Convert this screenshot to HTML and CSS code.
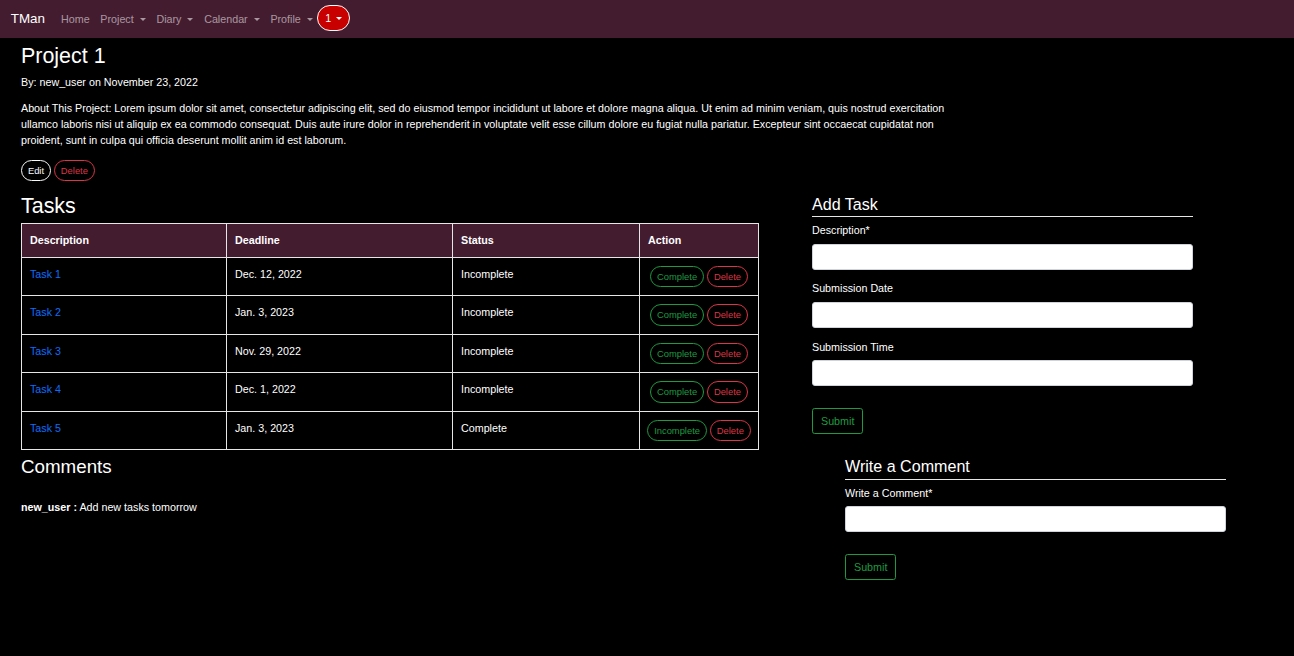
FILE: index.html
```html
<!DOCTYPE html>
<html lang="en">
<head>
<meta charset="utf-8">
<title>TMan - Project 1</title>
<link rel="stylesheet" href="styles.css">
</head>
<body>
<nav class="navbar">
  <a class="brand" href="#">TMan</a>
  <ul class="nav">
    <li><a class="nav-link" href="#">Home</a></li>
    <li><a class="nav-link" href="#">Project<span class="caret"></span></a></li>
    <li><a class="nav-link" href="#">Diary<span class="caret"></span></a></li>
    <li><a class="nav-link" href="#">Calendar<span class="caret"></span></a></li>
    <li><a class="nav-link" href="#">Profile<span class="caret"></span></a></li>
    <li><button class="notif">1<span class="caret"></span></button></li>
  </ul>
</nav>

<main class="page">
  <h2 class="title">Project 1</h2>
  <p class="meta">By: new_user on November 23, 2022</p>
  <p class="about">About This Project: Lorem ipsum dolor sit amet, consectetur adipiscing elit, sed do eiusmod tempor incididunt ut labore et dolore magna aliqua. Ut enim ad minim veniam, quis nostrud exercitation ullamco laboris nisi ut aliquip ex ea commodo consequat. Duis aute irure dolor in reprehenderit in voluptate velit esse cillum dolore eu fugiat nulla pariatur. Excepteur sint occaecat cupidatat non proident, sunt in culpa qui officia deserunt mollit anim id est laborum.</p>
  <div class="project-actions">
    <button class="btn btn-sm pill outline-light">Edit</button>
    <button class="btn btn-sm pill outline-danger">Delete</button>
  </div>

  <div class="row">
    <section class="left-col">
      <h2 class="section-title">Tasks</h2>
      <table class="tasks">
        <thead>
          <tr><th class="c1">Description</th><th class="c2">Deadline</th><th class="c3">Status</th><th class="c4">Action</th></tr>
        </thead>
        <tbody>
          <tr><td><a href="#">Task 1</a></td><td>Dec. 12, 2022</td><td>Incomplete</td><td class="act"><button class="btn btn-sm pill outline-success">Complete</button> <button class="btn btn-sm pill outline-danger">Delete</button></td></tr>
          <tr><td><a href="#">Task 2</a></td><td>Jan. 3, 2023</td><td>Incomplete</td><td class="act"><button class="btn btn-sm pill outline-success">Complete</button> <button class="btn btn-sm pill outline-danger">Delete</button></td></tr>
          <tr><td><a href="#">Task 3</a></td><td>Nov. 29, 2022</td><td>Incomplete</td><td class="act"><button class="btn btn-sm pill outline-success">Complete</button> <button class="btn btn-sm pill outline-danger">Delete</button></td></tr>
          <tr><td><a href="#">Task 4</a></td><td>Dec. 1, 2022</td><td>Incomplete</td><td class="act"><button class="btn btn-sm pill outline-success">Complete</button> <button class="btn btn-sm pill outline-danger">Delete</button></td></tr>
          <tr><td><a href="#">Task 5</a></td><td>Jan. 3, 2023</td><td>Complete</td><td class="act"><button class="btn btn-sm pill outline-success">Incomplete</button> <button class="btn btn-sm pill outline-danger">Delete</button></td></tr>
        </tbody>
      </table>
    </section>
    <section class="right-col task-form">
      <h4 class="form-title">Add Task</h4>
      <div class="form-group">
        <label>Description*</label>
        <input class="form-control" type="text">
      </div>
      <div class="form-group">
        <label>Submission Date</label>
        <input class="form-control" type="text">
      </div>
      <div class="form-group">
        <label>Submission Time</label>
        <input class="form-control" type="text">
      </div>
      <button class="btn outline-success submit">Submit</button>
    </section>
  </div>

  <div class="row">
    <section class="left-col">
      <h3 class="comments-title">Comments</h3>
      <p class="comment"><strong>new_user :</strong> Add new tasks tomorrow</p>
    </section>
    <section class="right-col comment-form">
      <h4 class="form-title">Write a Comment</h4>
      <div class="form-group">
        <label>Write a Comment*</label>
        <input class="form-control" type="text">
      </div>
      <button class="btn outline-success submit">Submit</button>
    </section>
  </div>
</main>
</body>
</html>
```
FILE: styles.css
```css
* { box-sizing: border-box; }

html, body {
  margin: 0;
  padding: 0;
  background: #000;
  color: #fff;
  font-family: "Liberation Sans", Arial, sans-serif;
  font-size: 10.72px;
  line-height: 1.5;
}

a { text-decoration: none; }

.navbar {
  height: 38px;
  background: #441c30;
  display: flex;
  align-items: center;
  padding: 0 10.72px;
}

.brand {
  color: #fff;
  font-size: 13.4px;
  font-weight: 400;
  margin-right: 10.72px;
}

.nav {
  display: flex;
  align-items: center;
  list-style: none;
  margin: 0;
  padding: 0;
}

.nav-link {
  display: block;
  color: rgba(255, 255, 255, 0.55);
  padding: 5.36px;
}

.caret {
  display: inline-block;
  margin-left: 6px;
  vertical-align: 2px;
  border-top: 3.2px solid;
  border-left: 3.2px solid transparent;
  border-right: 3.2px solid transparent;
}

.notif {
  font-family: inherit;
  font-size: 10.72px;
  line-height: 1.5;
  color: #fff;
  background: #c80000;
  border: 1px solid #fff;
  border-radius: 13px;
  padding: 4px 6.5px 4px 7px;
  margin: -1px 0 0 -1px;
  height: 26px;
}

.notif .caret { margin-left: 5px; }

.page {
  padding: 6px 21px 0 21px;
}

.title {
  font-size: 21.44px;
  font-weight: 400;
  line-height: 1.2;
  margin: 0 0 4.36px;
}

.meta {
  margin: 0 0 9.72px;
}

.about {
  max-width: 952px;
  margin: 0 0 11.72px;
}

.project-actions {
  display: flex;
  gap: 3px;
  margin-bottom: 12.5px;
}

.btn {
  font-family: inherit;
  display: inline-block;
  background: transparent;
  border: 1px solid;
  cursor: pointer;
  line-height: 1.5;
}

.btn-sm {
  font-size: 9.38px;
  padding: 2.68px 5.9px;
}

.pill { border-radius: 50px; }

.outline-light { color: #f8f9fa; border-color: #f8f9fa; }
.outline-danger { color: #dc3545; border-color: #dc3545; }
.outline-success { color: #1f9a40; border-color: #1f9a40; }

.row {
  display: flex;
  align-items: flex-start;
}

.left-col {
  width: 738px;
  flex: none;
}

.section-title {
  font-size: 21.44px;
  font-weight: 400;
  line-height: 1.2;
  margin: 0 0 3.5px;
}

.tasks {
  width: 738px;
  border-collapse: collapse;
  color: #fff;
}

.tasks th, .tasks td {
  border: 1px solid #e6e6e6;
  padding: 8px;
  vertical-align: top;
  text-align: left;
}

.tasks th {
  background: #441c30;
  font-weight: 700;
  height: 34px;
}

.tasks td { height: 38.5px; }

.tasks .c1 { width: 205px; }
.tasks .c2 { width: 226px; }
.tasks .c3 { width: 187px; }

.tasks a { color: #0d6efd; }

.tasks td.act {
  text-align: center;
  white-space: nowrap;
  padding: 8px 4px 7px;
}

.right-col {
  width: 381px;
  flex: none;
}

.task-form {
  margin-left: 53px;
  margin-top: 1px;
}

.form-title {
  font-size: 16.08px;
  font-weight: 400;
  line-height: 1.2;
  margin: 0 0 5px;
  padding-bottom: 2px;
  border-bottom: 1px solid #e6e6e6;
}

.form-group {
  margin-bottom: 10.72px;
}

.form-group label {
  display: block;
  margin-bottom: 5.5px;
}

.form-control {
  display: block;
  width: 100%;
  height: 26px;
  border: 1px solid #ced4da;
  border-radius: 3px;
  background: #fff;
  font-family: inherit;
  font-size: 10.72px;
  padding: 4px 8px;
}

.submit {
  font-size: 10.72px;
  padding: 4px 8px;
  border-radius: 2.68px;
  margin-top: 11px;
}

.comments-title {
  font-size: 18.76px;
  font-weight: 400;
  line-height: 1.2;
  margin: 6px 0 0;
}

.comment {
  margin: 20px 0 0;
}

.comment-form {
  margin-left: 86px;
  margin-top: 7px;
}
```
